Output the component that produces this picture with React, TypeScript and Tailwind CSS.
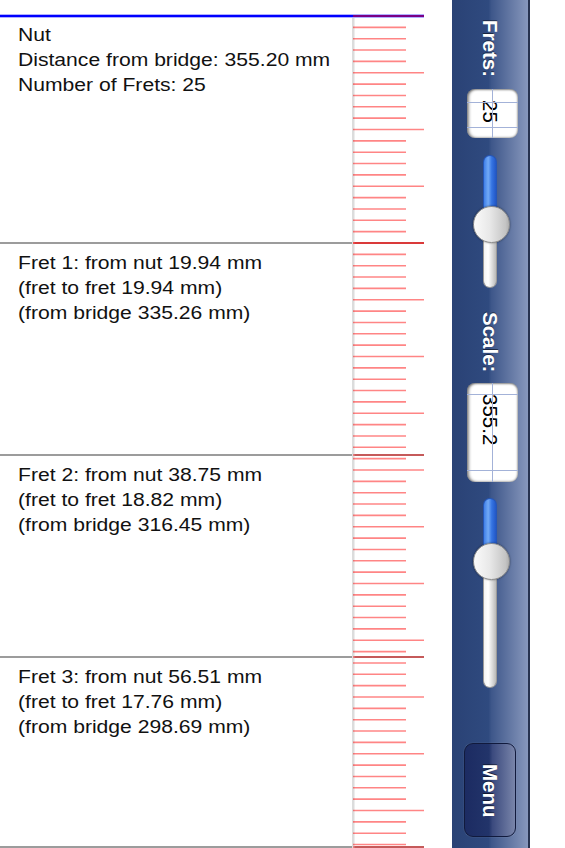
import React from 'react';

const PX_PER_MM = 11.35;
const NUT_Y = 16;
const FRET_LINES = [243, 455, 657, 847];

const sections = [
  {
    box: 'h-[225px] pt-[5px]',
    lines: ['Nut', 'Distance from bridge: 355.20 mm', 'Number of Frets: 25'],
  },
  {
    box: 'h-[212px] pt-[6px] border-t-2 border-[#9c9c9c]',
    lines: ['Fret 1: from nut 19.94 mm', '(fret to fret 19.94 mm)', '(from bridge 335.26 mm)'],
  },
  {
    box: 'h-[202px] pt-[6px] border-t-2 border-[#9c9c9c]',
    lines: ['Fret 2: from nut 38.75 mm', '(fret to fret 18.82 mm)', '(from bridge 316.45 mm)'],
  },
  {
    box: 'h-[190px] pt-[6px] border-t-2 border-[#9c9c9c]',
    lines: ['Fret 3: from nut 56.51 mm', '(fret to fret 17.76 mm)', '(from bridge 298.69 mm)'],
  },
];

const Ruler = () => {
  const ticks = [];
  for (let k = 0; k <= 73; k++) {
    const y = NUT_Y + k * PX_PER_MM;
    const long = k % 5 === 0;
    ticks.push(
      <line
        key={k}
        x1={1}
        x2={long ? 72 : 54}
        y1={y}
        y2={y}
        stroke="#ff0000"
        strokeOpacity={0.48}
        strokeWidth={k === 0 ? 2 : 1.6}
      />
    );
  }
  return (
    <svg
      className="pointer-events-none absolute left-[352px] top-0"
      width={72}
      height={848}
      viewBox="0 0 72 848"
    >
      <rect x={0} y={18} width={2.5} height={830} fill="#dcdcdc" />
      {ticks}
      {FRET_LINES.map((y) => (
        <line key={y} x1={1} x2={72} y1={y} y2={y} stroke="#ff0000" strokeOpacity={0.42} strokeWidth={2} />
      ))}
    </svg>
  );
};

const Slider = ({ box, fill, thumb }: { box: string; fill: string; thumb: string }) => (
  <div className={`relative ml-[3px] w-[37px] ${box}`}>
    <div className="ml-[10px] flex h-full w-[14px] flex-col">
      <div
        className={`${fill} rounded-t-full border border-b-0 border-[#2556b8] bg-[linear-gradient(to_right,#3f7fe8,#72aaf7_35%,#3574e2_65%,#2257c6)]`}
      />
      <div className="flex-1 rounded-b-full border border-t-0 border-[#9a9a9a] bg-[linear-gradient(to_right,#f2f2f2,#ffffff_35%,#dadada_70%,#b9b9b9)]" />
    </div>
    <div
      className={`absolute left-0 ${thumb} h-[37px] w-[37px] rounded-full border border-[#8c8c8c] bg-[linear-gradient(to_right,#fafafa,#e8e8e8_45%,#c4c4c4_90%,#b0b0b0)] shadow-[0_0_2px_rgba(0,0,0,0.55)]`}
    />
  </div>
);

const GridLines = ({ a, b }: { a: string; b: string }) => (
  <>
    <div className={`absolute left-0 right-0 ${a} h-px bg-[#a3b2d8]`} />
    <div className={`absolute left-0 right-0 ${b} h-px bg-[#a3b2d8]`} />
    <div className="absolute bottom-0 left-[25px] top-0 w-px bg-[#a3b2d8]" />
  </>
);

const Label = ({ text, className = '' }: { text: string; className?: string }) => (
  <div
    className={`text-[20.5px] font-bold leading-none text-white [writing-mode:vertical-rl] [text-shadow:-1px_0_0_rgba(0,0,0,0.5)] ${className}`}
  >
    {text}
  </div>
);

export default function App() {
  return (
    <div className="flex h-[848px] w-[565px] overflow-hidden bg-white font-['Liberation_Sans',Arial,sans-serif]">
      {/* fret list + ruler */}
      <div className="relative w-[424px] shrink-0 pt-[15px]">
        <div className="h-[2px] bg-[#0000ff] shadow-[0_1px_0_#b0b0ff,0_-1px_0_#b0b0ff]" />
        {sections.map((s, i) => (
          <div key={i} className={`${s.box} pl-[18px]`}>
            <div className="origin-left scale-x-[1.13] whitespace-nowrap text-[18.7px] leading-[25px] text-[#111111]">
              {s.lines.map((l) => (
                <div key={l}>{l}</div>
              ))}
            </div>
          </div>
        ))}
        <div className="border-t-2 border-[#9c9c9c]" />
        <Ruler />
      </div>

      <div className="w-[28px] shrink-0" />

      {/* side toolbar */}
      <div className="flex h-[848px] w-[78px] shrink-0 flex-col items-center border-r-2 border-[#27324f] bg-[linear-gradient(to_right,#2a4275_0%,#2f4a7f_48%,#3e578a_52%,#8797bc_100%)]">
        <Label text="Frets:" className="mt-[20px]" />

        <div className="relative ml-[5px] mt-[12px] flex h-[49px] w-[51px] flex-col items-center rounded-[8px] bg-white pr-[5px] pt-[11px] shadow-[inset_2px_0_3px_rgba(0,0,0,0.45),inset_0_1px_2px_rgba(0,0,0,0.25),inset_-1px_0_2px_rgba(0,0,0,0.25)]">
          <span className="text-[20.5px] leading-none text-black [writing-mode:vertical-rl]">25</span>
          <GridLines a="top-[13px]" b="top-[38px]" />
        </div>

        <Slider box="mt-[17px] h-[133px]" fill="h-[70px]" thumb="top-[51px]" />

        <Label text="Scale:" className="mt-[24px]" />

        <div className="relative ml-[5px] mt-[11px] flex h-[99px] w-[51px] flex-col items-center rounded-[8px] bg-white pr-[5px] pt-[11px] shadow-[inset_2px_0_3px_rgba(0,0,0,0.45),inset_0_1px_2px_rgba(0,0,0,0.25),inset_-1px_0_2px_rgba(0,0,0,0.25)]">
          <span className="text-[20.5px] leading-none text-black [writing-mode:vertical-rl]">355.2</span>
          <GridLines a="top-[11px]" b="top-[87px]" />
        </div>

        <Slider box="mt-[16px] h-[190px]" fill="h-[64px]" thumb="top-[45px]" />

        <button className="mt-[55px] flex h-[94px] w-[52px] items-center justify-center rounded-[9px] border border-[#111a3d] bg-[linear-gradient(to_right,#1c2b62_0%,#22346a_48%,#3b4a7e_55%,#7985aa_100%)] shadow-[0_0_1px_rgba(255,255,255,0.4)]">
          <Label text="Menu" />
        </button>
      </div>

      <div className="flex-1" />
    </div>
  );
}
